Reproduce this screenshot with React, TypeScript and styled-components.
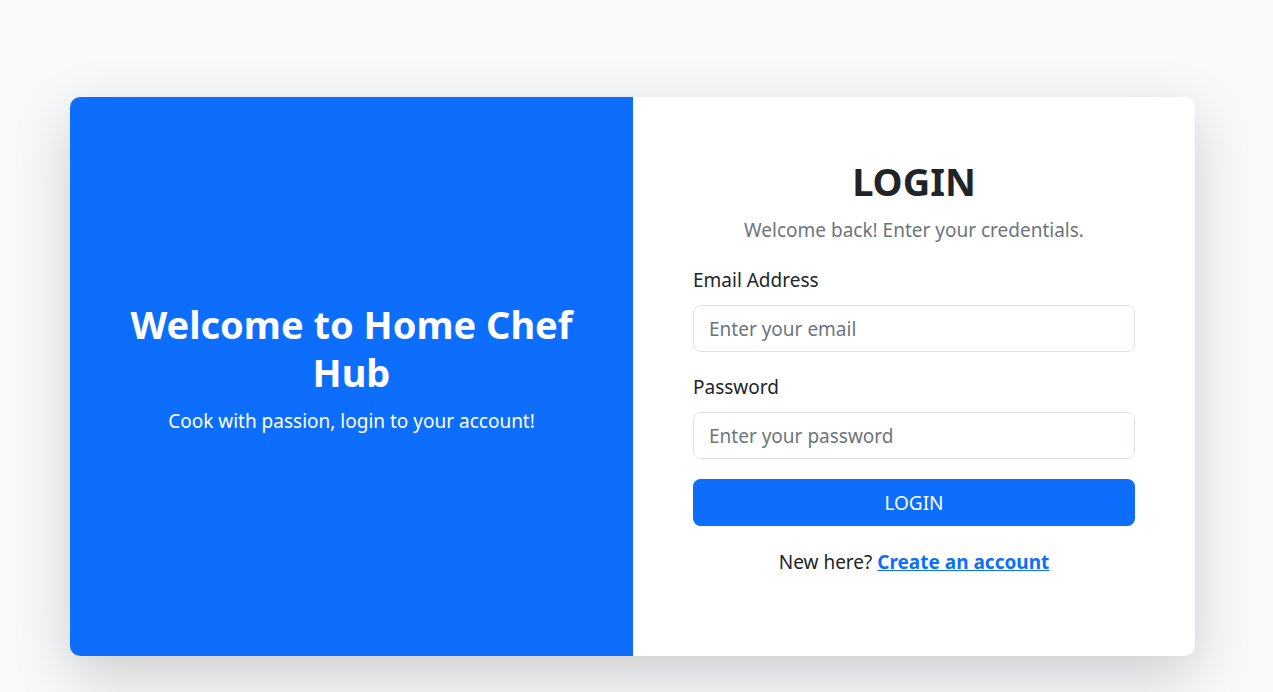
import React from "react";
import styled, { createGlobalStyle } from "styled-components";

const GlobalStyle = createGlobalStyle`
  html, body { margin: 0; padding: 0; background: #f8f9fa; }
  body { font-family: "Noto Sans", "Open Sans", sans-serif; color: #212529; }
  * { box-sizing: border-box; }
`;

const Page = styled.div`
  min-height: 692px;
  padding: 97px 78px 0 70px;
  display: flex;
  justify-content: center;
  align-items: flex-start;
`;

const Card = styled.div`
  width: 1125px;
  display: grid;
  grid-template-columns: 563px 562px;
  border-radius: 10px;
  overflow: hidden;
  background: #fff;
  box-shadow: 0 20px 60px rgba(0, 0, 0, 0.175);
`;

const HeroPanel = styled.div`
  background: #0d6efd;
  color: #fff;
  display: flex;
  flex-direction: column;
  justify-content: center;
  align-items: center;
  text-align: center;
  padding: 2px 48px 0;
`;

const HeroTitle = styled.h2`
  margin: 0 0 10px;
  font-size: 38px;
  font-weight: 700;
  line-height: 48px;
`;

const HeroText = styled.p`
  margin: 0 0 20px;
  font-size: 19px;
  line-height: 30px;
`;

const FormPanel = styled.div`
  padding: 60px;
  display: flex;
  flex-direction: column;
`;

const Title = styled.h2`
  margin: 0 0 10px;
  text-align: center;
  font-size: 38px;
  font-weight: 700;
  line-height: 48px;
  color: #212529;
`;

const Subtitle = styled.p`
  margin: 0 0 20px;
  text-align: center;
  font-size: 19px;
  line-height: 30px;
  color: #6c757d;
`;

const Field = styled.div`
  display: flex;
  flex-direction: column;
  margin-bottom: 20px;
`;

const Label = styled.label`
  font-size: 19px;
  line-height: 30px;
  margin-bottom: 10px;
  color: #212529;
`;

const Input = styled.input`
  height: 47px;
  width: 100%;
  padding: 7.5px 15px;
  font-family: inherit;
  font-size: 19px;
  color: #212529;
  border: 1px solid #dee2e6;
  border-radius: 7.5px;
  background: #fff;
  outline: none;
  &::placeholder { color: #6c757d; opacity: 1; }
`;

const Button = styled.button`
  height: 47px;
  width: 100%;
  border: none;
  border-radius: 7.5px;
  background: #0d6efd;
  color: #fff;
  font-family: inherit;
  font-size: 19px;
  cursor: pointer;
`;

const Footer = styled.p`
  margin: 21px 0 19px;
  text-align: center;
  font-size: 19px;
  line-height: 30px;
  color: #212529;
`;

const Link = styled.a`
  color: #0d6efd;
  font-weight: 700;
  text-decoration: underline;
`;

export default function App() {
  return (
    <>
      <GlobalStyle />
      <Page>
        <Card>
          <HeroPanel>
            <HeroTitle>Welcome to Home Chef Hub</HeroTitle>
            <HeroText>Cook with passion, login to your account!</HeroText>
          </HeroPanel>
          <FormPanel>
            <Title>LOGIN</Title>
            <Subtitle>Welcome back! Enter your credentials.</Subtitle>
            <Field>
              <Label htmlFor="email">Email Address</Label>
              <Input id="email" type="email" placeholder="Enter your email" />
            </Field>
            <Field>
              <Label htmlFor="password">Password</Label>
              <Input id="password" type="password" placeholder="Enter your password" />
            </Field>
            <Button type="button">LOGIN</Button>
            <Footer>
              New here? <Link href="#">Create an account</Link>
            </Footer>
          </FormPanel>
        </Card>
      </Page>
    </>
  );
}
